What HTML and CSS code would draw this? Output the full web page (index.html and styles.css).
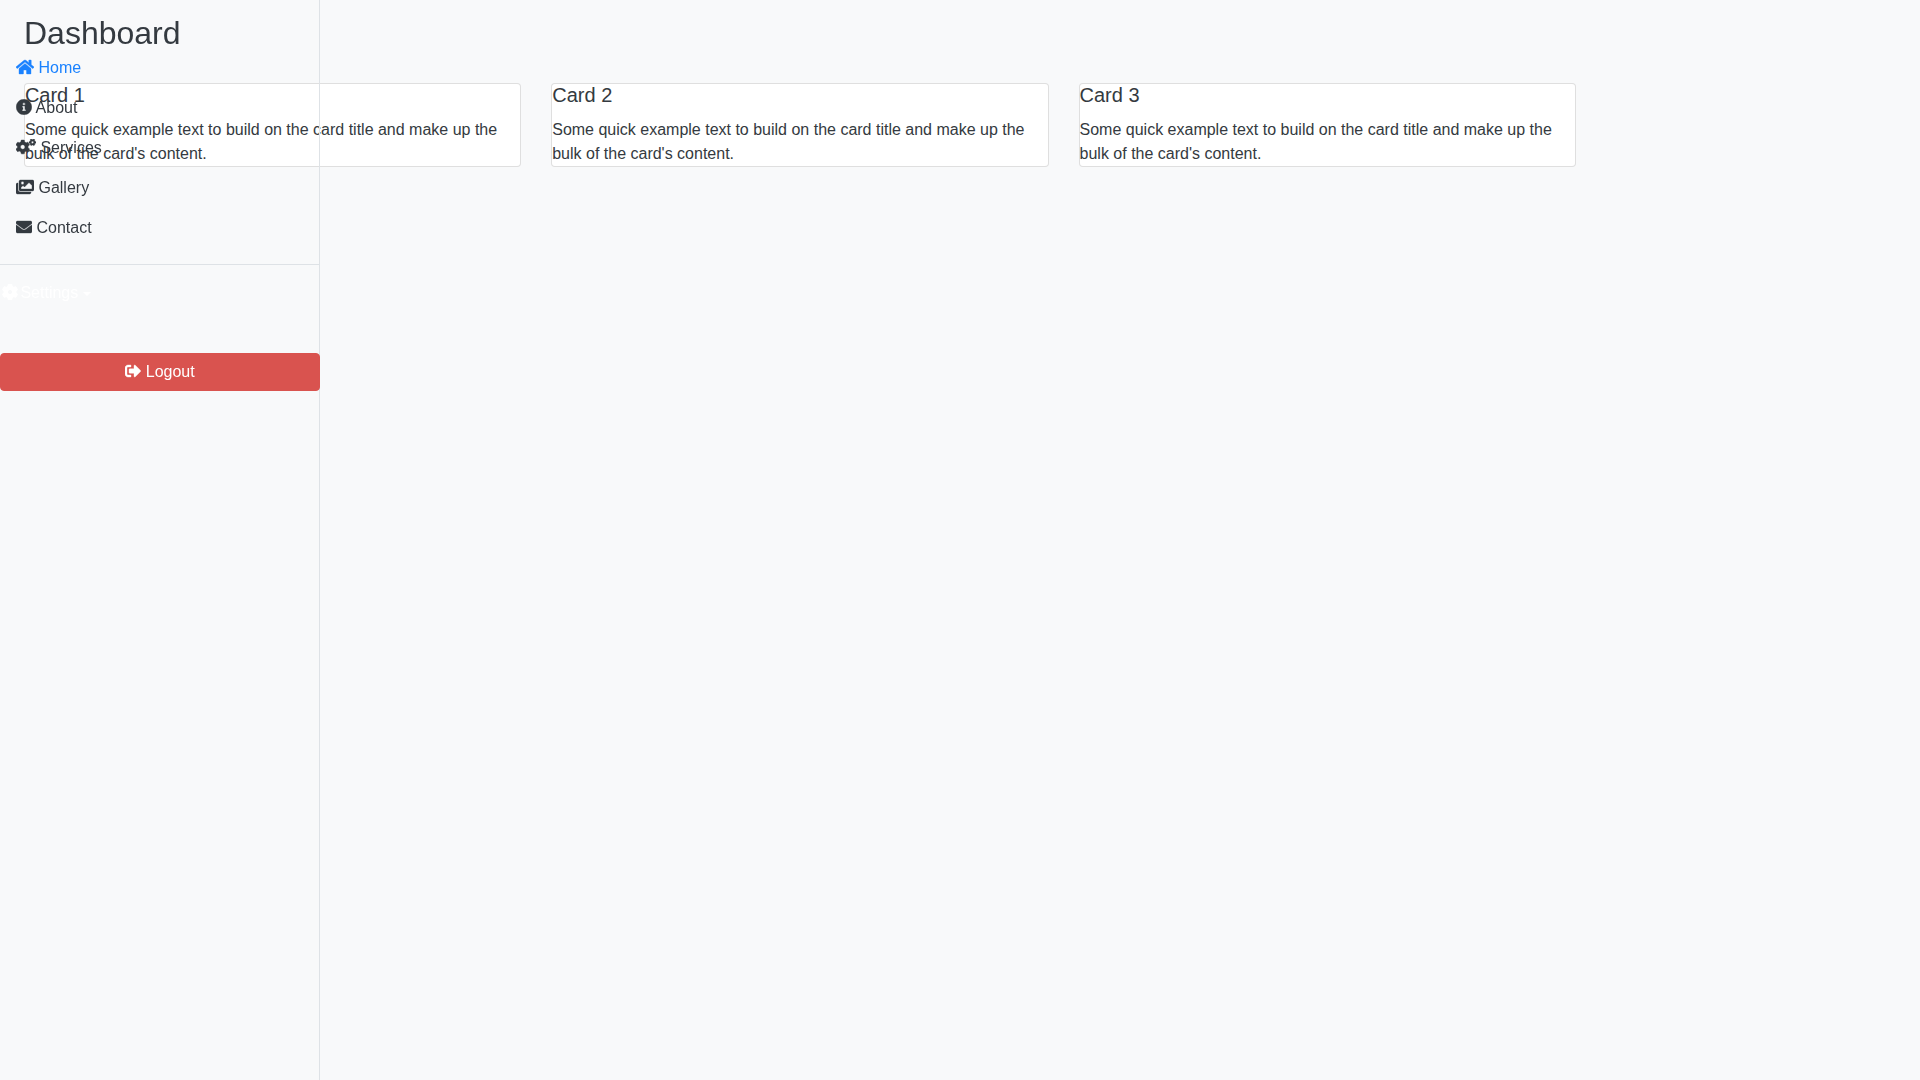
FILE: index.html
```html
<!DOCTYPE html>
<html lang="en">
<head>
    <meta charset="UTF-8">
    <meta name="viewport" content="width=device-width, initial-scale=1.0">
    <title>Dashboard</title>
    <link rel="stylesheet" href="styles.css">
</head>
<body>
    <aside class="sidebar">
        <h2 class="sidebar-title">Dashboard</h2>
        <nav class="side-nav">
            <a class="nav-link active" href="#"><svg class="icon" viewBox="0 0 576 512"><path d="M280.37 148.26L96 300.11V464a16 16 0 0 0 16 16l112.06-.29a16 16 0 0 0 15.92-16V368a16 16 0 0 1 16-16h64a16 16 0 0 1 16 16v95.64a16 16 0 0 0 16 16.05L464 480a16 16 0 0 0 16-16V300L295.67 148.26a12.19 12.19 0 0 0-15.3 0zM571.6 251.47L488 182.56V44.05a12 12 0 0 0-12-12h-56a12 12 0 0 0-12 12v72.61L318.47 43a48 48 0 0 0-61 0L4.34 251.47a12 12 0 0 0-1.6 16.9l25.5 31A12 12 0 0 0 45.15 301l235.22-193.74a12.19 12.19 0 0 1 15.3 0L530.9 301a12 12 0 0 0 16.9-1.6l25.5-31a12 12 0 0 0-1.7-16.93z"/></svg> Home</a>
            <a class="nav-link" href="#"><svg class="icon" viewBox="0 0 512 512"><path d="M256 8C119.043 8 8 119.083 8 256c0 136.997 111.043 248 248 248s248-111.003 248-248C504 119.083 392.957 8 256 8zm0 110c23.196 0 42 18.804 42 42s-18.804 42-42 42-42-18.804-42-42 18.804-42 42-42zm56 254c0 6.627-5.373 12-12 12h-88c-6.627 0-12-5.373-12-12v-24c0-6.627 5.373-12 12-12h12v-64h-12c-6.627 0-12-5.373-12-12v-24c0-6.627 5.373-12 12-12h64c6.627 0 12 5.373 12 12v100h12c6.627 0 12 5.373 12 12v24z"/></svg> About</a>
            <a class="nav-link" href="#"><svg class="icon" viewBox="0 0 640 512"><path d="M512.1 191l-8.2 14.3c-3 5.3-9.4 7.5-15.1 5.4-11.8-4.4-22.6-10.7-32.1-18.6-4.6-3.8-5.8-10.5-2.8-15.7l8.2-14.3c-6.9-8-12.3-17.3-15.9-27.4h-16.5c-6 0-11.2-4.3-12.2-10.3-2-12-2.1-24.6 0-37.1 1-6 6.2-10.4 12.2-10.4h16.5c3.6-10.1 9-19.4 15.9-27.4l-8.2-14.3c-3-5.2-1.9-11.9 2.8-15.7 9.5-7.9 20.4-14.2 32.1-18.6 5.7-2.1 12.1.1 15.1 5.4l8.2 14.3c10.5-1.9 21.2-1.9 31.7 0L552 6.3c3-5.3 9.4-7.5 15.1-5.4 11.8 4.4 22.6 10.7 32.1 18.6 4.6 3.8 5.8 10.5 2.8 15.7l-8.2 14.3c6.9 8 12.3 17.3 15.9 27.4h16.5c6 0 11.2 4.3 12.2 10.3 2 12 2.1 24.6 0 37.1-1 6-6.2 10.4-12.2 10.4h-16.5c-3.6 10.1-9 19.4-15.9 27.4l8.2 14.3c3 5.2 1.9 11.9-2.8 15.7-9.5 7.9-20.4 14.2-32.1 18.6-5.7 2.1-12.1-.1-15.1-5.4l-8.2-14.3c-10.4 1.9-21.2 1.9-31.7 0zm-10.5-58.8c38.5 29.6 82.4-14.3 52.8-52.8-38.5-29.7-82.4 14.3-52.8 52.8zM386.3 286.1l33.7 16.8c10.1 5.8 14.5 18.1 10.5 29.1-8.9 24.2-26.4 46.4-42.6 65.8-7.4 8.9-20.2 11.1-30.3 5.3l-29.1-16.8c-16 13.7-34.6 24.6-54.9 31.7v33.6c0 11.6-8.3 21.6-19.7 23.6-24.6 4.2-50.4 4.4-75.9 0-11.5-2-20-11.9-20-23.6V418c-20.3-7.2-38.9-18-54.9-31.7L74 403c-10 5.8-22.9 3.6-30.3-5.3-16.2-19.4-33.3-41.6-42.2-65.7-4-10.9.4-23.2 10.5-29.1l33.3-16.8c-3.9-20.9-3.9-42.4 0-63.4L12 205.8c-10.1-5.8-14.6-18.1-10.5-29 8.9-24.2 26-46.4 42.2-65.8 7.4-8.9 20.2-11.1 30.3-5.3l29.1 16.8c16-13.7 34.6-24.6 54.9-31.7V57.1c0-11.5 8.2-21.5 19.6-23.5 24.6-4.2 50.5-4.4 76-.1 11.5 2 20 11.9 20 23.6v33.6c20.3 7.2 38.9 18 54.9 31.7l29.1-16.8c10-5.8 22.9-3.6 30.3 5.3 16.2 19.4 33.2 41.6 42.1 65.8 4 10.9.1 23.2-10 29.1l-33.7 16.8c3.9 21 3.9 42.5 0 63.5zm-117.6 21.1c59.2-77-28.7-164.9-105.7-105.7-59.2 77 28.7 164.9 105.7 105.7z"/></svg> Services</a>
            <a class="nav-link" href="#"><svg class="icon" viewBox="0 0 576 512"><path d="M480 416v16c0 26.51-21.49 48-48 48H48c-26.51 0-48-21.49-48-48V176c0-26.51 21.49-48 48-48h16v208c0 44.112 35.888 80 80 80h336zm96-80V80c0-26.51-21.49-48-48-48H144c-26.51 0-48 21.49-48 48v256c0 26.51 21.49 48 48 48h384c26.51 0 48-21.49 48-48zM256 128c0 26.51-21.49 48-48 48s-48-21.49-48-48 21.49-48 48-48 48 21.49 48 48zm-96 144l55.515-55.515c4.686-4.686 12.284-4.686 16.971 0L272 256l135.515-135.515c4.686-4.686 12.284-4.686 16.971 0L512 208v112H160v-48z"/></svg> Gallery</a>
            <a class="nav-link" href="#"><svg class="icon" viewBox="0 0 512 512"><path d="M502.3 190.8c3.9-3.1 9.7-.2 9.7 4.7V400c0 26.5-21.5 48-48 48H48c-26.5 0-48-21.5-48-48V195.6c0-5 5.7-7.8 9.7-4.7 22.4 17.4 52.1 39.5 154.1 113.6 21.1 15.4 56.7 47.8 92.2 47.6 35.7.3 72-32.8 92.3-47.6 102-74.1 131.6-96.3 154-113.7zM256 320c23.2.4 56.6-29.2 73.4-41.4 132.7-96.3 142.8-104.7 173.4-128.7 5.8-4.5 9.2-11.5 9.2-18.9v-19c0-26.5-21.5-48-48-48H48C21.5 64 0 85.5 0 112v19c0 7.4 3.4 14.3 9.2 18.9 30.6 23.9 40.7 32.4 173.4 128.7 16.8 12.2 50.2 41.8 73.4 41.4z"/></svg> Contact</a>
        </nav>
        <hr class="divider">
        <a class="settings-toggle" href="#"><svg class="icon settings-icon" viewBox="0 0 512 512"><path d="M487.4 315.7l-42.6-24.6c4.3-23.2 4.3-47 0-70.2l42.6-24.6c4.9-2.8 7.1-8.6 5.5-14-11.1-35.6-30-67.8-54.7-94.6-3.8-4.1-10-5.1-14.8-2.3L380.8 110c-17.9-15.4-38.5-27.3-60.8-35.1V25.8c0-5.6-3.9-10.5-9.4-11.7-36.7-8.2-74.3-7.8-109.2 0-5.5 1.2-9.4 6.1-9.4 11.7V75c-22.2 7.9-42.8 19.8-60.8 35.1L88.7 85.5c-4.9-2.8-11-1.9-14.8 2.3-24.7 26.7-43.6 58.9-54.7 94.6-1.7 5.4.6 11.2 5.5 14L67.3 221c-4.3 23.2-4.3 47 0 70.2l-42.6 24.6c-4.9 2.8-7.1 8.6-5.5 14 11.1 35.6 30 67.8 54.7 94.6 3.8 4.1 10 5.1 14.8 2.3l42.6-24.6c17.9 15.4 38.5 27.3 60.8 35.1v49.2c0 5.6 3.9 10.5 9.4 11.7 36.7 8.2 74.3 7.8 109.2 0 5.5-1.2 9.4-6.1 9.4-11.7v-49.2c22.2-7.9 42.8-19.8 60.8-35.1l42.6 24.6c4.9 2.8 11 1.9 14.8-2.3 24.7-26.7 43.6-58.9 54.7-94.6 1.5-5.5-.7-11.3-5.6-14.1zM256 336c-44.1 0-80-35.9-80-80s35.9-80 80-80 80 35.9 80 80-35.9 80-80 80z"/></svg> Settings<span class="caret"></span></a>
        <button class="logout-btn" type="button"><svg class="icon" viewBox="0 0 512 512"><path d="M497 273L329 441c-15 15-41 4.5-41-17v-96H152c-13.3 0-24-10.7-24-24v-96c0-13.3 10.7-24 24-24h136V88c0-21.4 25.9-32 41-17l168 168c9.3 9.4 9.3 24.6 0 34zM192 436v-40c0-6.6-5.4-12-12-12H96c-17.7 0-32-14.3-32-32V160c0-17.7 14.3-32 32-32h84c6.6 0 12-5.4 12-12V76c0-6.6-5.4-12-12-12H96c-53 0-96 43-96 96v192c0 53 43 96 96 96h84c6.6 0 12-5.4 12-12z"/></svg> Logout</button>
    </aside>

    <main class="content">
        <div class="card">
            <h5 class="card-title">Card 1</h5>
            <p class="card-text">Some quick example text to build on the card title and make up the bulk of the card's content.</p>
        </div>
        <div class="card">
            <h5 class="card-title">Card 2</h5>
            <p class="card-text">Some quick example text to build on the card title and make up the bulk of the card's content.</p>
        </div>
        <div class="card">
            <h5 class="card-title">Card 3</h5>
            <p class="card-text">Some quick example text to build on the card title and make up the bulk of the card's content.</p>
        </div>
    </main>
</body>
</html>
```

FILE: styles.css
```css
* {
    box-sizing: border-box;
}
body {
    margin: 0;
    font-family: "Liberation Sans", Arial, sans-serif;
    font-size: 16px;
    line-height: 1.5;
    color: #343a40;
    background-color: #f8f9fa;
}
a {
    text-decoration: none;
    color: inherit;
}
.icon {
    height: 1em;
    vertical-align: -0.125em;
    fill: currentColor;
    stroke: currentColor;
    stroke-width: 12;
}

/* sidebar sits on top of the page content */
.sidebar {
    position: fixed;
    top: 0;
    left: 0;
    z-index: 10;
    width: 320px;
    height: 100vh;
    padding-top: 19px;
    border-right: 1px solid #dee2e6;
}
.sidebar-title {
    margin: 0 0 0 24px;
    font-size: 32px;
    font-weight: 400;
    line-height: 29px;
}
.side-nav {
    display: flex;
    flex-direction: column;
}
.nav-link {
    padding: 8px 16px;
}
.nav-link.active {
    color: #1a82ff;
}
.divider {
    height: 1px;
    margin: 16px -1px 16px 0;
    border: 0;
    background-color: #dee2e6;
}
.settings-toggle {
    display: block;
    padding-left: 2px;
    color: #fff;
}
.settings-icon {
    margin-right: -2px;
    stroke-width: 30;
}
.caret {
    display: inline-block;
    margin-left: 5px;
    vertical-align: 2px;
    border-top: 4.8px solid;
    border-right: 4.8px solid transparent;
    border-left: 4.8px solid transparent;
}
.logout-btn {
    display: block;
    width: 320px;
    height: 38px;
    margin-top: 48px;
    padding: 6px 12px;
    border: 1px solid #d9534f;
    border-radius: 4px;
    background-color: #d9534f;
    color: #fff;
    font: inherit;
}

.content {
    display: grid;
    grid-template-columns: repeat(3, 1fr);
    gap: 30px;
    width: 1575.9px;
    padding: 83px 0 0 23.9px;
}
.card {
    border: 1px solid rgba(0, 0, 0, 0.125);
    border-radius: 4px;
    background-color: #fff;
}
.card-title {
    margin: 0 0 12px;
    font-size: 20px;
    font-weight: 500;
    line-height: 22px;
}
.card-text {
    margin: 0;
}
```
